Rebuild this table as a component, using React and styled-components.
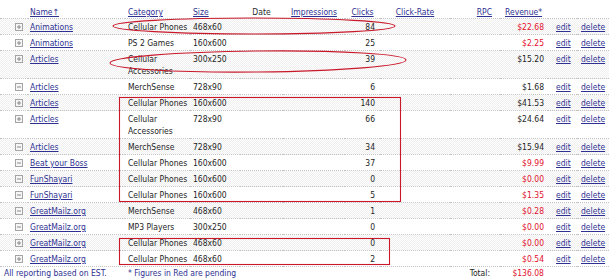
import React from 'react'
import styled, { createGlobalStyle } from 'styled-components'

const GlobalStyle = createGlobalStyle`
  body {
    margin: 0;
    background: #ffffff;
    font-family: "DejaVu Sans Condensed", "DejaVu Sans", sans-serif;
    font-stretch: condensed;
    font-size: 8.5px;
    color: #1e1e1e;
  }
`

const rows = [
  { open: false, name: 'Animations', cat: 'Cellular Phones', size: '468x60', clicks: '84', rev: '$22.68', pending: true },
  { open: false, name: 'Animations', cat: 'PS 2 Games', size: '160x600', clicks: '25', rev: '$2.25', pending: true },
  { open: false, name: 'Articles', cat: 'Cellular Accessories', size: '300x250', clicks: '39', rev: '$15.20' },
  { open: true, name: 'Articles', cat: 'MerchSense', size: '728x90', clicks: '6', rev: '$1.68' },
  { open: false, name: 'Articles', cat: 'Cellular Phones', size: '160x600', clicks: '140', rev: '$41.53' },
  { open: false, name: 'Articles', cat: 'Cellular Accessories', size: '728x90', clicks: '66', rev: '$24.64' },
  { open: true, name: 'Articles', cat: 'MerchSense', size: '728x90', clicks: '34', rev: '$15.94' },
  { open: true, name: 'Beat your Boss', cat: 'Cellular Phones', size: '160x600', clicks: '37', rev: '$9.99', pending: true },
  { open: true, name: 'FunShayari', cat: 'Cellular Phones', size: '160x600', clicks: '0', rev: '$0.00', pending: true },
  { open: true, name: 'FunShayari', cat: 'Cellular Phones', size: '160x600', clicks: '5', rev: '$1.35', pending: true },
  { open: true, name: 'GreatMailz.org', cat: 'MerchSense', size: '468x60', clicks: '1', rev: '$0.28', pending: true },
  { open: true, name: 'GreatMailz.org', cat: 'MP3 Players', size: '300x250', clicks: '0', rev: '$0.00', pending: true },
  { open: false, name: 'GreatMailz.org', cat: 'Cellular Phones', size: '468x60', clicks: '0', rev: '$0.00', pending: true },
  { open: false, name: 'GreatMailz.org', cat: 'Cellular Phones', size: '468x60', clicks: '2', rev: '$0.54', pending: true },
]

const widths = [28, 97, 65, 50, 43, 62, 35, 70, 50, 48, 29, 32]

const App = () => {
  return (
    <Page>
      <GlobalStyle />
      <Report>
        <colgroup>
          {widths.map((w, i) => <col key={i} style={{ width: w }} />)}
        </colgroup>
        <thead>
          <tr>
            <Head />
            <Head $pl={2}><SortLink>Name↑</SortLink></Head>
            <Head $pl={3}><SortLink>Category</SortLink></Head>
            <Head $pl={3}><SortLink>Size</SortLink></Head>
            <Head $align="center">Date</Head>
            <Head $align="center"><SortLink>Impressions</SortLink></Head>
            <Head $align="center"><SortLink>Clicks</SortLink></Head>
            <Head $align="center"><SortLink>Click-Rate</SortLink></Head>
            <Head $align="right" $pr={8}><SortLink>RPC</SortLink></Head>
            <Head $pl={5}><SortLink>Revenue*</SortLink></Head>
            <Head />
            <Head />
          </tr>
        </thead>
        <tbody>
          {rows.map((r, i) => (
            <Row key={i} $shaded={i % 2 === 0}>
              <Cell $pl={15}><Toggle open={r.open} /></Cell>
              <Cell $pl={2}><NameLink>{r.name}</NameLink></Cell>
              <Cell $pl={3}>{r.cat}</Cell>
              <Cell $pl={3}>{r.size}</Cell>
              <Cell />
              <Cell />
              <Cell $align="right" $pr={5}>{r.clicks}</Cell>
              <Cell />
              <Cell />
              <Cell $align="right" $pr={4}><Money $pending={r.pending}>{r.rev}</Money></Cell>
              <Cell $pl={8}><ActionLink>edit</ActionLink></Cell>
              <Cell $pl={4}><ActionLink>delete</ActionLink></Cell>
            </Row>
          ))}
        </tbody>
        <tfoot>
          <tr>
            <Foot colSpan={2} $pl={4}><Note>All reporting based on EST.</Note></Foot>
            <Foot colSpan={6} $pl={3}><Note>* Figures in Red are pending</Note></Foot>
            <Foot $align="right" $pr={10}>Total:</Foot>
            <Foot $align="right" $pr={4}><Money $pending>$136.08</Money></Foot>
            <Foot />
            <Foot />
          </tr>
        </tfoot>
      </Report>
      <Marks viewBox="0 0 609 280" width="609" height="280">
        <ellipse cx="254" cy="26" rx="141" ry="8" />
        <ellipse cx="258" cy="61.5" rx="148" ry="10.5" transform="rotate(-0.6 258 61.5)" />
        <rect x="119.5" y="97.5" width="281" height="104" />
        <rect x="119.5" y="238.5" width="270" height="26" />
      </Marks>
    </Page>
  )
}

const Toggle = ({ open }) => (
  <svg width="8" height="8" viewBox="0 0 8 8" style={{ display: 'block', marginTop: 2 }}>
    <rect x="0.5" y="0.5" width="7" height="7" fill="#f6f6f6" stroke="#a4a4a4" />
    <line x1="2" y1="4" x2="6" y2="4" stroke="#8a8a8a" />
    {!open && <line x1="4" y1="2" x2="4" y2="6" stroke="#8a8a8a" />}
  </svg>
)

const Page = styled.div`
  position: relative;
  width: 609px;
  height: 280px;
  padding-top: 2px;
  box-sizing: border-box;
  overflow: hidden;
`

const Report = styled.table`
  width: 609px;
  table-layout: fixed;
  border-collapse: collapse;
  font-size: 8.5px;
`

const Head = styled.th`
  font-weight: normal;
  text-align: ${p => p.$align || 'left'};
  padding: 4px ${p => p.$pr || 0}px 0 ${p => p.$pl || 0}px;
  line-height: 12px;
  color: #2a2a2a;
  white-space: nowrap;
`

const Row = styled.tr`
  border-top: 1px dotted #c4c4c4;
  background: ${p => p.$shaded
    ? 'repeating-conic-gradient(#efefef 0% 25%, #ffffff 0% 50%) 0 0 / 2px 2px'
    : '#ffffff'};
`

const Cell = styled.td`
  text-align: ${p => p.$align || 'left'};
  padding: 2px ${p => p.$pr || 0}px 1px ${p => p.$pl || 0}px;
  line-height: 12px;
  vertical-align: top;
  color: #1e1e1e;
`

const Foot = styled.td`
  border-top: 1px dotted #c4c4c4;
  text-align: ${p => p.$align || 'left'};
  padding: 0 ${p => p.$pr || 0}px 0 ${p => p.$pl || 0}px;
  line-height: 12px;
  white-space: nowrap;
  color: #1e1e1e;
`

const SortLink = styled.span`
  color: #2e3192;
  text-decoration: underline;
`

const NameLink = styled.span`
  color: #2e3192;
  text-decoration: underline;
  white-space: nowrap;
`

const ActionLink = styled.span`
  color: #2e3192;
  text-decoration: underline;
`

const Money = styled.span`
  color: ${p => p.$pending ? '#e2102c' : '#1e1e1e'};
`

const Note = styled.span`
  color: #2e3192;
`

const Marks = styled.svg`
  position: absolute;
  left: 0;
  top: 0;
  pointer-events: none;
  fill: none;
  stroke: #c8182a;
  stroke-width: 1.1;
`

export default App
